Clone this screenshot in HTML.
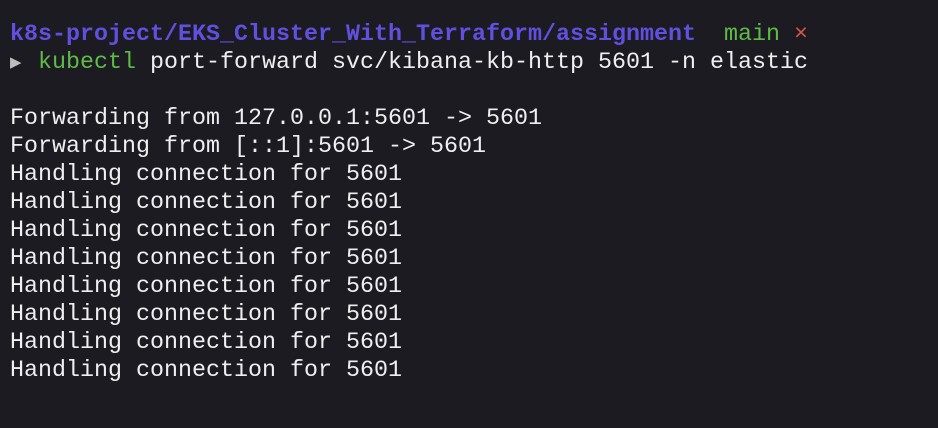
<!DOCTYPE html>
<html><head><style>
html,body{margin:0;padding:0;background:#1c1b21;width:938px;height:428px;overflow:hidden}
pre{margin:0;position:absolute;left:10px;top:21px;font-family:"Liberation Mono",monospace;font-size:23.33px;line-height:28px;color:#efeff1;letter-spacing:0}
.p{color:#6150e0;font-weight:bold}
.g{color:#5fbb47}
.r{color:#d9534a}
.a{color:#bdbdbd;font-size:19px;display:inline-block;width:14px}
</style></head><body>
<pre><span class="p">k8s-project/EKS_Cluster_With_Terraform/assignment</span>  <span class="g">main</span> <span class="r">×</span>
<span class="a">▶</span> <span class="g">kubectl</span> port-forward svc/kibana-kb-http 5601 -n elastic

Forwarding from 127.0.0.1:5601 -&gt; 5601
Forwarding from [::1]:5601 -&gt; 5601
Handling connection for 5601
Handling connection for 5601
Handling connection for 5601
Handling connection for 5601
Handling connection for 5601
Handling connection for 5601
Handling connection for 5601
Handling connection for 5601</pre>
</body></html>
